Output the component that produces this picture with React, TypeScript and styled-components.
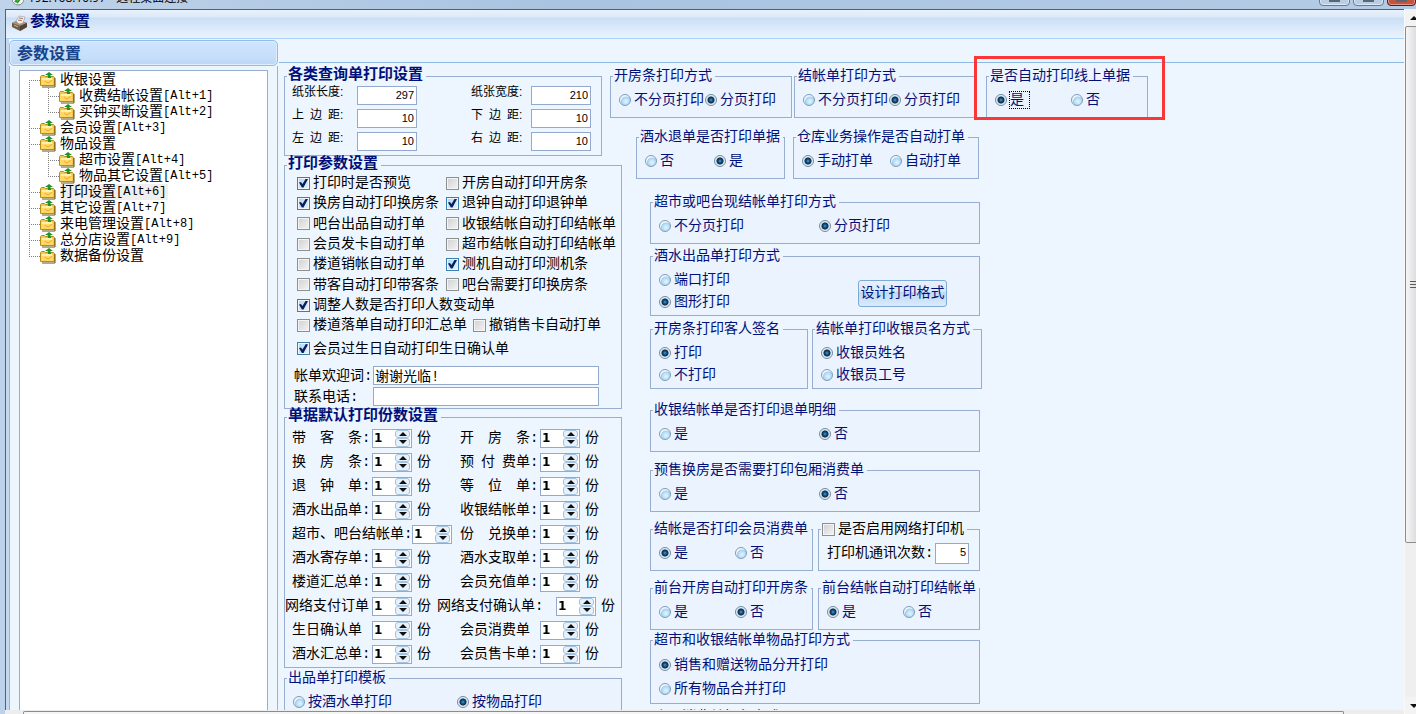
import React from 'react';
import styled, { createGlobalStyle, css } from 'styled-components';

const navy = '#00107a';
const line = '#98aed0';
const fieldLine = '#93a9cd';

const GlobalStyle = createGlobalStyle`
  * { box-sizing: border-box; }
  body {
    margin: 0;
    overflow: hidden;
    font-family: 'Liberation Mono', 'Noto Sans CJK SC', monospace;
    font-size: 14px;
    line-height: 16px;
    color: #000;
    background: #bcd2ea;
  }
  button, input { font: inherit; color: inherit; margin: 0; padding: 0; }
  ul { list-style: none; margin: 0; padding: 0; }
  h1, h2 { margin: 0; font-size: 15px; font-weight: 700; }
`;

/* ---------- window frame ---------- */

const Desktop = styled.div`
  display: flex;
  flex-direction: column;
  height: 100vh;
  overflow: hidden;
`;

const RemoteBar = styled.header`
  display: flex;
  align-items: flex-end;
  height: 9px;
  flex: none;
  padding-left: 12px;
  overflow: hidden;
  background: linear-gradient(90deg, #bfd3ea, #a9c3e0 40%, #b4cbe5);
`;

const RemoteTitle = styled.span`
  flex: 1;
  margin-left: 4px;
  padding-bottom: 3px;
  font-family: 'Open Sans', 'Noto Sans CJK SC', sans-serif;
  font-size: 12px;
  line-height: 16px;
  white-space: pre;
`;

const CaptionButton = styled.button<{ $close?: boolean }>`
  display: flex;
  justify-content: center;
  width: ${(p) => (p.$close ? 29 : 31)}px;
  height: 19px;
  margin: 0 0 3px 3px;
  padding-top: 6px;
  border: 1px solid ${(p) => (p.$close ? '#5c1a1a' : '#64799a')};
  border-radius: 0 0 4px 4px;
  background: ${(p) => (p.$close ? '#c4533f' : '#b9cde4')};
  box-shadow: inset 0 0 0 1px ${(p) => (p.$close ? '#e09a8c' : '#dce8f5')};
  flex: none;
`;

const CaptionGlyph = styled.span`
  width: 11px;
  height: 8px;
  border: 2px solid #5a6673;
  background: #fff;
`;

const Screen = styled.div`
  display: flex;
  flex: 1;
  min-height: 0;
  padding-left: 5px;
`;

const ScreenMain = styled.div`
  display: flex;
  flex-direction: column;
  flex: 1;
  min-width: 0;
`;

const AppFrame = styled.div`
  display: flex;
  flex-direction: column;
  flex: 1;
  min-height: 0;
  border-top: 1px solid #44628c;
  border-left: 1px solid #44628c;
  background: #edf5fe;
`;

const AppTitle = styled.div`
  display: flex;
  align-items: center;
  gap: 2px;
  flex: none;
  height: 29px;
  padding: 0 0 3px 6px;
  border-bottom: 1px solid #a9d0f6;
  background: linear-gradient(#e9f2fc 0, #dce9f8 7px, #c9def5 8px, #dbe9fa 18px, #e9f3fe);
  color: ${navy};
`;

const Workspace = styled.div`
  display: flex;
  flex: 1;
  min-height: 0;
  overflow: hidden;
`;

/* ---------- side bar ---------- */

const SideBar = styled.aside`
  display: flex;
  flex-direction: column;
  flex: none;
  width: 273px;
  padding: 1px 1px 0 0;
  border-left: 3px solid #c6d8ef;
  background: #edf5fd;
`;

const SideHeader = styled.div`
  flex: none;
  height: 26px;
  padding: 6px 0 0 7px;
  border: 1px solid #92bbe8;
  border-radius: 5px;
  background: linear-gradient(#cfe4ff, #c5def9 70%, #bcd7f3);
  box-shadow: inset 0 0 0 1px #deedff;
  color: #15428b;

  h2 { font-size: 16px; }
`;

const SideBody = styled.div`
  display: flex;
  flex: 1;
  min-height: 0;
  padding: 4px 9px 0;
  border: solid #92b4e0;
  border-width: 0 1px;
`;

const Tree = styled.ul`
  flex: 1;
  padding: 1px 0 0 9px;
  border: 1px solid ${line};
  border-bottom: 0;
  background: #fff;
`;

const TreeRow = styled.div`
  display: flex;
  align-items: center;
  height: 16px;
`;

type GuideKind = 'start' | 'tee' | 'corner' | 'pass';

const dotsDown = 'repeating-linear-gradient(#808080 0 1px, transparent 1px 2px)';
const dotsAcross = 'repeating-linear-gradient(90deg, #808080 0 1px, transparent 1px 2px)';

const Guide = styled.span<{ $kind: GuideKind }>`
  flex: none;
  width: ${(p) => (p.$kind === 'pass' ? 19 : 11)}px;
  height: 16px;
  background-repeat: no-repeat;
  ${(p) =>
    p.$kind === 'pass'
      ? css`
          background-image: ${dotsDown};
          background-size: 1px 100%;
        `
      : css`
          background-image: ${dotsDown}, ${dotsAcross};
          background-position: 0 ${p.$kind === 'start' ? '8px' : '0'}, 0 8px;
          background-size: 1px ${p.$kind === 'tee' ? '100%' : '8px'}, 100% 1px;
        `}
`;

const TreeLink = styled.a<{ $current?: boolean }>`
  display: flex;
  margin-left: 4px;
  padding-right: 2px;
  color: #000;
  text-decoration: none;
  white-space: nowrap;
  background: ${(p) => (p.$current ? '#efefef' : 'none')};
`;

const Shortcut = styled.span`
  font-size: 12px;
`;

/* ---------- form area ---------- */

const FormArea = styled.main`
  display: flex;
  align-items: flex-start;
  flex: 1;
  min-width: 0;
  margin-top: 23px;
  padding: 5px 0 0 5px;
  border-top: 1px solid #8cb8e2;
`;

const LeftColumn = styled.div`
  display: flex;
  flex-direction: column;
  align-items: flex-start;
  flex: none;
  width: 338px;
`;

const RightColumn = styled.div`
  flex: 1;
  min-width: 0;
  margin-left: -12px;
`;

const GroupRow = styled.div<{ $indent: number; $top: number; $gap: number }>`
  display: flex;
  gap: ${(p) => p.$gap}px;
  margin-top: ${(p) => p.$top}px;
  padding-left: ${(p) => p.$indent}px;
`;

const Group = styled.fieldset<{ $width: number; $tone?: 'strong' | 'plain' }>`
  position: relative;
  flex: none;
  width: ${(p) => p.$width}px;
  min-width: 0;
  margin: 0;
  padding: 0 0 1px;
  border: 1px solid ${line};
  color: ${(p) => (p.$tone ? '#000' : navy)};
  background: ${(p) => (p.$tone ? 'none' : '#ebf3fe')};
  white-space: nowrap;
`;

const Legend = styled.legend<{ $bold?: boolean }>`
  display: flex;
  align-items: center;
  gap: 3px;
  height: 16px;
  margin-left: 2px;
  padding: 0 3px 0 1px;
  font-size: ${(p) => (p.$bold ? 15 : 14)}px;
  line-height: ${(p) => (p.$bold ? 18 : 16)}px;
  font-weight: ${(p) => (p.$bold ? 700 : 400)};
  color: ${(p) => (p.$bold ? navy : 'inherit')};
`;

const Options = styled.div<{ $first?: number }>`
  display: grid;
  grid-template-columns: ${(p) => (p.$first ? `${p.$first}px 1fr` : '1fr')};
  align-items: center;
  height: 32px;
  padding-left: 8px;
`;

const StackRow = styled.div`
  display: flex;
  align-items: center;
  justify-content: space-between;
  padding-right: 32px;
`;

const OptionStack = styled.div<{ $pitch: number }>`
  display: grid;
  grid-auto-rows: ${(p) => p.$pitch}px;
  align-items: center;
  padding: 5px 0 1px 8px;
`;

const ChoiceLabel = styled.label`
  display: flex;
  align-items: center;
  gap: 3px;
`;

const Radio = styled.input`
  appearance: none;
  flex: none;
  width: 12px;
  height: 12px;
  border: 1px solid #7f9db5;
  border-radius: 50%;
  background: radial-gradient(circle at 60% 65%, #e4f6ff 0, #b4dcf8 40%, #a2cdee 52%, #eef6fb 60%);

  &:checked {
    border-color: #6f8ba3;
    background: radial-gradient(circle at 50% 50%, #3ba5dc 0, #17568a 22%, #12293f 44%, #b9cddd 54%, #eef4f9 66%);
  }
`;

const Check = styled.input`
  appearance: none;
  display: grid;
  place-items: center;
  flex: none;
  width: 13px;
  height: 13px;
  border: 1px solid #8e8f8f;
  background: linear-gradient(135deg, #cfd0d3, #f4f4f4);
  box-shadow: inset 0 0 0 1px #f4f4f4;

  &:checked {
    border-color: #3c7fb1;
    background: linear-gradient(135deg, #a9d8f5, #e6f5fd);
  }

  &:checked::before {
    content: '';
    width: 9px;
    height: 9px;
    background: #0b1e5c;
    clip-path: polygon(0 45%, 22% 38%, 38% 62%, 76% 0, 100% 6%, 50% 100%, 32% 100%);
  }
`;

const FocusText = styled.span`
  width: 19px;
  outline: 1px dotted #000;
`;

const RedMark = styled.span`
  position: absolute;
  inset: -28px -18px -3px -13px;
  border: 3px solid #fb3636;
  pointer-events: none;
`;

const PaperGrid = styled.div`
  display: grid;
  grid-template-columns: 65px 114px 60px 60px;
  grid-auto-rows: 23px;
  align-items: start;
  padding: 0 0 1px 7px;
  font-size: 12px;
  font-family: 'Liberation Sans', 'Noto Sans CJK SC', sans-serif;
`;

const NumberBox = styled.input`
  width: 60px;
  height: 19px;
  padding: 0 2px 2px 0;
  border: 1px solid ${fieldLine};
  background: #fff;
  font-family: 'Liberation Sans', sans-serif;
  font-size: 11px;
  text-align: right;
`;

const PaperBox = styled(NumberBox)`
  margin-top: 2px;
`;

const CheckGrid = styled.div`
  display: grid;
  grid-template-columns: 149px 1fr;
  grid-auto-rows: 20px 20px 21px;
  align-items: center;
  padding-left: 12px;
`;

const CheckLine = styled.div`
  display: flex;
  grid-column: 1 / -1;
  gap: 6px;
`;

const LastCheck = styled.div`
  display: flex;
  align-items: center;
  height: 27px;
  padding-left: 12px;
`;

const TextRows = styled.div`
  padding: 3px 0 0 9px;
`;

const TextRow = styled.div`
  display: grid;
  grid-template-columns: 79px 226px;
  align-items: center;
  height: 21px;
`;

const TextBox = styled.input`
  height: 19px;
  padding: 0 1px 2px;
  border: 1px solid ${fieldLine};
  background: #fff;
`;

const CopyRows = styled.div`
  padding-top: 1px;
`;

const CopyRow = styled.div<{ $split: number; $indent: number }>`
  display: grid;
  grid-template-columns: ${(p) => p.$split}px 1fr;
  align-items: center;
  height: 24px;
  padding-left: ${(p) => p.$indent}px;
`;

const CopyField = styled.div`
  display: flex;
  align-items: center;
`;

const CopyLabel = styled.label<{ $width: number }>`
  flex: none;
  width: ${(p) => p.$width}px;
`;

const SpinBox = styled.span`
  display: flex;
  justify-content: space-between;
  flex: none;
  width: 40px;
  height: 19px;
  border: 1px solid ${fieldLine};
  background: #fff;
`;

const SpinInput = styled.input`
  width: 20px;
  border: 0;
  padding-left: 1px;
  background: none;
  font-family: 'DejaVu Sans', sans-serif;
  font-size: 12px;
  font-weight: 700;
`;

const SpinButtons = styled.span`
  display: flex;
  flex-direction: column;
  width: 16px;
  padding-right: 1px;
`;

const SpinButton = styled.button`
  display: flex;
  align-items: center;
  justify-content: center;
  flex: 1;
  min-height: 0;
  border: 1px solid #a3c3e3;
  border-radius: 3px;
  background: #e6f1fb;
`;

const Unit = styled.span<{ $gap: number }>`
  margin-left: ${(p) => p.$gap}px;
`;

const DesignButton = styled.button`
  width: 89px;
  height: 27px;
  margin-top: 8px;
  border: 1px solid #7fa9d6;
  border-radius: 3px;
  background: linear-gradient(#e8f1fb, #d9e8f8 42%, #bfd8f2 43%, #d9ebfd);
`;

const NetRow = styled.div`
  display: flex;
  align-items: center;
  justify-content: space-between;
  height: 32px;
  padding: 0 10px 0 8px;
`;

const CountBox = styled(NumberBox)`
  width: 34px;
  height: 21px;
`;

/* ---------- scroll bars ---------- */

const VScroll = styled.div`
  display: flex;
  flex-direction: column;
  flex: none;
  width: 12px;
  overflow: hidden;
  border-left: 1px solid #f8f8f8;
  background: #efefef;
`;

const VArrow = styled.button`
  display: flex;
  align-items: center;
  justify-content: center;
  width: 17px;
  height: 17px;
  border: 0;
  background: #f3f3f3;
`;

const VTrack = styled.div`
  flex: 1;
  min-height: 0;
`;

const VThumb = styled.div`
  display: flex;
  flex-direction: column;
  align-items: center;
  justify-content: center;
  gap: 2px;
  width: 17px;
  height: 77%;
  border: 1px solid #8c8c8c;
  border-radius: 2px;
  background: linear-gradient(90deg, #f6f6f6, #e8e8e8 40%, #cfd1d4);
`;

const Grip = styled.span`
  width: 8px;
  height: 1px;
  background: #5b5b5b;
`;

const HScroll = styled.div`
  flex: none;
  height: 4px;
  padding: 1px 60px 0 18px;
  background: #ededed;
`;

const HThumb = styled.div`
  height: 3px;
  border: 1px solid #8c8c8c;
  border-bottom: 0;
  border-radius: 2px 2px 0 0;
  background: #f5f5f5;
`;

/* ---------- drawings ---------- */

const RemoteIcon = () => (
  <svg width="12" height="9" viewBox="0 0 12 9" aria-hidden="true">
    <circle cx="6" cy="-1" r="6" fill="#f4f8f4" stroke="#7c8c80" />
    <path d="M3 2 5 0M5 3 8-1" stroke="#2f9a32" strokeWidth="2" />
  </svg>
);

const PrinterIcon = () => (
  <svg width="16" height="16" viewBox="0 0 16 16" aria-hidden="true">
    <path d="M0 8 7 5l8 3v4l-7 4-8-4z" fill="#6e5846" />
    <path d="m0 8 7-3 8 3-7 3z" fill="#a8927b" />
    <path d="M8 11l7-3v4l-7 4z" fill="#544234" />
    <path d="m4 6 3-5 6 1-2 6-4 1z" fill="#eef2f5" stroke="#8a97a3" strokeWidth=".6" />
    <path d="m7 3 4 .6M6 5l4 .7" stroke="#b56b55" />
    <path d="m2 10 4 2" stroke="#c9b79f" />
  </svg>
);

const FolderIcon = () => (
  <svg width="16" height="16" viewBox="0 0 16 16" aria-hidden="true">
    <path d="M.5 13.5V4.5l1-1h3l1 1h8l1 1v8z" fill="#f3c64c" stroke="#b98a1c" />
    <path d="M1 6h12v7H1z" fill="#ffd863" />
    <path d="M2 6h10v2H2z" fill="#fff0ae" />
    <path d="M5 9q3 4 7-1" fill="none" stroke="#f0a53c" />
    <path d="M15 6v9H2" fill="none" stroke="#6e5414" />
    <path d="M9 0 5 3h2c1 0 1 1 1 3h3c0-2 0-2-1-3h3z" fill="#1f9326" />
  </svg>
);

const Triangle = ({ down, size = 8 }: { down?: boolean; size?: number }) => (
  <svg width={size} height={size / 2} viewBox="0 0 8 4" aria-hidden="true">
    <path d={down ? 'M0 0h8L4 4z' : 'M0 4h8L4 0z'} fill="#101010" />
  </svg>
);

/* ---------- parts ---------- */

type ChoiceProps = { text: string; on?: boolean; name?: string; focus?: boolean };

const RadioChoice = ({ text, on, name, focus }: ChoiceProps) => (
  <ChoiceLabel>
    <Radio type="radio" name={name} defaultChecked={on} />
    {focus ? <FocusText>{text}</FocusText> : text}
  </ChoiceLabel>
);

const CheckChoice = ({ text, on }: ChoiceProps) => (
  <ChoiceLabel>
    <Check type="checkbox" defaultChecked={on} />
    {text}
  </ChoiceLabel>
);

type RadioGroupProps = {
  title: string;
  width: number;
  options: string[];
  picked: number;
  first?: number;
  pitch?: number;
  focused?: boolean;
  children?: React.ReactNode;
};

const RadioGroup = ({ title, width, options, picked, first, pitch, focused, children }: RadioGroupProps) => {
  const items = options.map((text, i) => (
    <RadioChoice key={text} text={text} name={title} on={i === picked} focus={focused && i === picked} />
  ));
  return (
    <Group $width={width}>
      <Legend>{title}</Legend>
      {pitch ? (
        <StackRow>
          <OptionStack $pitch={pitch}>{items}</OptionStack>
          {children}
        </StackRow>
      ) : (
        <>
          <Options $first={first}>{items}</Options>
          {children}
        </>
      )}
    </Group>
  );
};

type CopySpec = { text: string; width?: number; gap?: number };

const Copies = ({ text, width = 80, gap = 5 }: CopySpec) => (
  <CopyField>
    <CopyLabel $width={width} htmlFor={text}>{text}</CopyLabel>
    <SpinBox>
      <SpinInput id={text} defaultValue="1" />
      <SpinButtons>
        <SpinButton aria-label="增加"><Triangle /></SpinButton>
        <SpinButton aria-label="减少"><Triangle down /></SpinButton>
      </SpinButtons>
    </SpinBox>
    <Unit $gap={gap}>份</Unit>
  </CopyField>
);

/* ---------- data ---------- */

type Node = { text: string; keys?: string; current?: boolean; children?: Node[] };

const tree: Node[] = [
  { text: '收银设置', children: [{ text: '收费结帐设置', keys: '[Alt+1]' }, { text: '买钟买断设置', keys: '[Alt+2]' }] },
  { text: '会员设置', keys: '[Alt+3]' },
  { text: '物品设置', children: [{ text: '超市设置', keys: '[Alt+4]' }, { text: '物品其它设置', keys: '[Alt+5]' }] },
  { text: '打印设置', keys: '[Alt+6]', current: true },
  { text: '其它设置', keys: '[Alt+7]' },
  { text: '来电管理设置', keys: '[Alt+8]' },
  { text: '总分店设置', keys: '[Alt+9]' },
  { text: '数据备份设置' },
];

const paper: [string, string][] = [
  ['纸张长度:', '297'], ['纸张宽度:', '210'],
  ['上\u2002边\u2002距:', '10'], ['下\u2002边\u2002距:', '10'],
  ['左\u2002边\u2002距:', '10'], ['右\u2002边\u2002距:', '10'],
];

const checks: [string, boolean][] = [
  ['打印时是否预览', true], ['开房自动打印开房条', false],
  ['换房自动打印换房条', true], ['退钟自动打印退钟单', true],
  ['吧台出品自动打单', false], ['收银结帐自动打印结帐单', false],
  ['会员发卡自动打单', false], ['超市结帐自动打印结帐单', false],
  ['楼道销帐自动打单', false], ['测机自动打印测机条', true],
  ['带客自动打印带客条', false], ['吧台需要打印换房条', false],
];

type CopyLine = { a: CopySpec; b: CopySpec; split?: number; indent?: number };

const copies: CopyLine[] = [
  { a: { text: '带　客　条:' }, b: { text: '开　房　条:' } },
  { a: { text: '换　房　条:' }, b: { text: '预\u2002付\u2002费单:' } },
  { a: { text: '退　钟　单:' }, b: { text: '等　位　单:' } },
  { a: { text: '酒水出品单:' }, b: { text: '收银结帐单:' } },
  { a: { text: '超市、吧台结帐单:', width: 120, gap: 8 }, b: { text: '兑换单:', width: 52 }, split: 196 },
  { a: { text: '酒水寄存单:' }, b: { text: '酒水支取单:' } },
  { a: { text: '楼道汇总单:' }, b: { text: '会员充值单:' } },
  { a: { text: '网络支付订单', width: 87 }, b: { text: '网络支付确认单:', width: 119 }, split: 152, indent: 0 },
  { a: { text: '生日确认单' }, b: { text: '会员消费单' } },
  { a: { text: '酒水汇总单:' }, b: { text: '会员售卡单:' } },
];

const TreeItem = ({ node, kind, child }: { node: Node; kind: GuideKind; child?: boolean }) => (
  <li>
    <TreeRow>
      {child && <Guide $kind="pass" />}
      <Guide $kind={kind} />
      <FolderIcon />
      <TreeLink href="#" $current={node.current}>
        {node.text}
        {node.keys && <Shortcut>{node.keys}</Shortcut>}
      </TreeLink>
    </TreeRow>
    {node.children && (
      <ul>
        {node.children.map((c, i, all) => (
          <TreeItem key={c.text} node={c} child kind={i === all.length - 1 ? 'corner' : 'tee'} />
        ))}
      </ul>
    )}
  </li>
);

export default function App() {
  return (
    <Desktop>
      <GlobalStyle />
      <RemoteBar>
        <RemoteIcon />
        <RemoteTitle>{'192.168.10.97 - 远程桌面连接'}</RemoteTitle>
        <CaptionButton aria-label="最小化"><CaptionGlyph /></CaptionButton>
        <CaptionButton aria-label="还原"><CaptionGlyph /></CaptionButton>
        <CaptionButton aria-label="关闭" $close><CaptionGlyph /></CaptionButton>
      </RemoteBar>
      <Screen>
        <ScreenMain>
          <AppFrame>
            <AppTitle>
              <PrinterIcon />
              <h1>参数设置</h1>
            </AppTitle>
            <Workspace>
              <SideBar>
                <SideHeader><h2>参数设置</h2></SideHeader>
                <SideBody>
                  <Tree>
                    {tree.map((n, i) => (
                      <TreeItem
                        key={n.text}
                        node={n}
                        kind={i === 0 ? 'start' : i === tree.length - 1 ? 'corner' : 'tee'}
                      />
                    ))}
                  </Tree>
                </SideBody>
              </SideBar>

              <FormArea>
                <LeftColumn>
                  <Group $width={318} $tone="strong">
                    <Legend $bold>各类查询单打印设置</Legend>
                    <PaperGrid>
                      {paper.map(([text, value]) => (
                        <React.Fragment key={text}>
                          <label htmlFor={text}>{text}</label>
                          <PaperBox id={text} defaultValue={value} />
                        </React.Fragment>
                      ))}
                    </PaperGrid>
                  </Group>

                  <GroupRow $indent={0} $top={1} $gap={0}>
                    <Group $width={338} $tone="strong">
                      <Legend $bold>打印参数设置</Legend>
                      <CheckGrid>
                        {checks.map(([text, on]) => (
                          <CheckChoice key={text} text={text} on={on} />
                        ))}
                        <CheckLine><CheckChoice text="调整人数是否打印人数变动单" on /></CheckLine>
                        <CheckLine>
                          <CheckChoice text="楼道落单自动打印汇总单" />
                          <CheckChoice text="撤销售卡自动打单" />
                        </CheckLine>
                      </CheckGrid>
                      <LastCheck><CheckChoice text="会员过生日自动打印生日确认单" on /></LastCheck>
                      <TextRows>
                        <TextRow>
                          <label htmlFor="welcome">帐单欢迎词:</label>
                          <TextBox id="welcome" defaultValue="谢谢光临!" />
                        </TextRow>
                        <TextRow>
                          <label htmlFor="phone">联系电话:</label>
                          <TextBox id="phone" />
                        </TextRow>
                      </TextRows>
                    </Group>
                  </GroupRow>

                  <Group $width={338} $tone="strong">
                    <Legend $bold>单据默认打印份数设置</Legend>
                    <CopyRows>
                      {copies.map(({ a, b, split = 168, indent = 7 }) => (
                        <CopyRow key={a.text} $split={split} $indent={indent}>
                          <Copies {...a} />
                          <Copies {...b} />
                        </CopyRow>
                      ))}
                    </CopyRows>
                  </Group>

                  <GroupRow $indent={0} $top={2} $gap={0}>
                    <RadioGroup title="出品单打印模板" width={338} first={164} options={['按酒水单打印', '按物品打印']} picked={1} />
                  </GroupRow>
                </LeftColumn>

                <RightColumn>
                  <GroupRow $indent={0} $top={0} $gap={2}>
                    <RadioGroup title="开房条打印方式" width={182} first={86} options={['不分页打印', '分页打印']} picked={1} />
                    <RadioGroup title="结帐单打印方式" width={182} first={86} options={['不分页打印', '分页打印']} picked={1} />
                    <GroupRow $indent={8} $top={0} $gap={0}>
                      <RadioGroup title="是否自动打印线上单据" width={162} first={76} options={['是', '否']} picked={0} focused>
                        <RedMark />
                      </RadioGroup>
                    </GroupRow>
                  </GroupRow>
                  <GroupRow $indent={26} $top={11} $gap={8}>
                    <RadioGroup title="酒水退单是否打印单据" width={149} first={69} options={['否', '是']} picked={1} />
                    <RadioGroup title="仓库业务操作是否自动打单" width={186} first={88} options={['手动打单', '自动打单']} picked={0} />
                  </GroupRow>
                  <GroupRow $indent={40} $top={15} $gap={0}>
                    <RadioGroup title="超市或吧台现结帐单打印方式" width={330} first={160} options={['不分页打印', '分页打印']} picked={1} />
                  </GroupRow>
                  <GroupRow $indent={40} $top={4} $gap={0}>
                    <RadioGroup title="酒水出品单打印方式" width={330} pitch={22} options={['端口打印', '图形打印']} picked={1}>
                      <DesignButton>设计打印格式</DesignButton>
                    </RadioGroup>
                  </GroupRow>
                  <GroupRow $indent={40} $top={5} $gap={4}>
                    <RadioGroup title="开房条打印客人签名" width={158} pitch={22} options={['打印', '不打印']} picked={0} />
                    <RadioGroup title="结帐单打印收银员名方式" width={170} pitch={22} options={['收银员姓名', '收银员工号']} picked={0} />
                  </GroupRow>
                  <GroupRow $indent={40} $top={13} $gap={0}>
                    <RadioGroup title="收银结帐单是否打印退单明细" width={330} first={160} options={['是', '否']} picked={1} />
                  </GroupRow>
                  <GroupRow $indent={40} $top={10} $gap={0}>
                    <RadioGroup title="预售换房是否需要打印包厢消费单" width={330} first={160} options={['是', '否']} picked={1} />
                  </GroupRow>
                  <GroupRow $indent={40} $top={9} $gap={5}>
                    <RadioGroup title="结帐是否打印会员消费单" width={163} first={76} options={['是', '否']} picked={0} />
                    <Group $width={162} $tone="plain">
                      <Legend><CheckChoice text="是否启用网络打印机" /></Legend>
                      <NetRow>
                        <label htmlFor="retries">打印机通讯次数:</label>
                        <CountBox id="retries" defaultValue="5" />
                      </NetRow>
                    </Group>
                  </GroupRow>
                  <GroupRow $indent={40} $top={9} $gap={5}>
                    <RadioGroup title="前台开房自动打印开房条" width={163} first={76} options={['是', '否']} picked={1} />
                    <RadioGroup title="前台结帐自动打印结帐单" width={162} first={76} options={['是', '否']} picked={0} />
                  </GroupRow>
                  <GroupRow $indent={40} $top={2} $gap={0}>
                    <RadioGroup title="超市和收银结帐单物品打印方式" width={330} pitch={24} options={['销售和赠送物品分开打印', '所有物品合并打印']} picked={0} />
                  </GroupRow>
                  <GroupRow $indent={40} $top={5} $gap={0}>
                    <RadioGroup title="会员消费单打印方式" width={330} first={160} options={['是', '否']} picked={0} />
                  </GroupRow>
                </RightColumn>
              </FormArea>
            </Workspace>
          </AppFrame>
          <HScroll><HThumb /></HScroll>
        </ScreenMain>
        <VScroll>
          <VArrow aria-label="向上滚动"><Triangle /></VArrow>
          <VTrack>
            <VThumb><Grip /><Grip /><Grip /></VThumb>
          </VTrack>
          <VArrow aria-label="向下滚动"><Triangle down /></VArrow>
        </VScroll>
      </Screen>
    </Desktop>
  );
}
